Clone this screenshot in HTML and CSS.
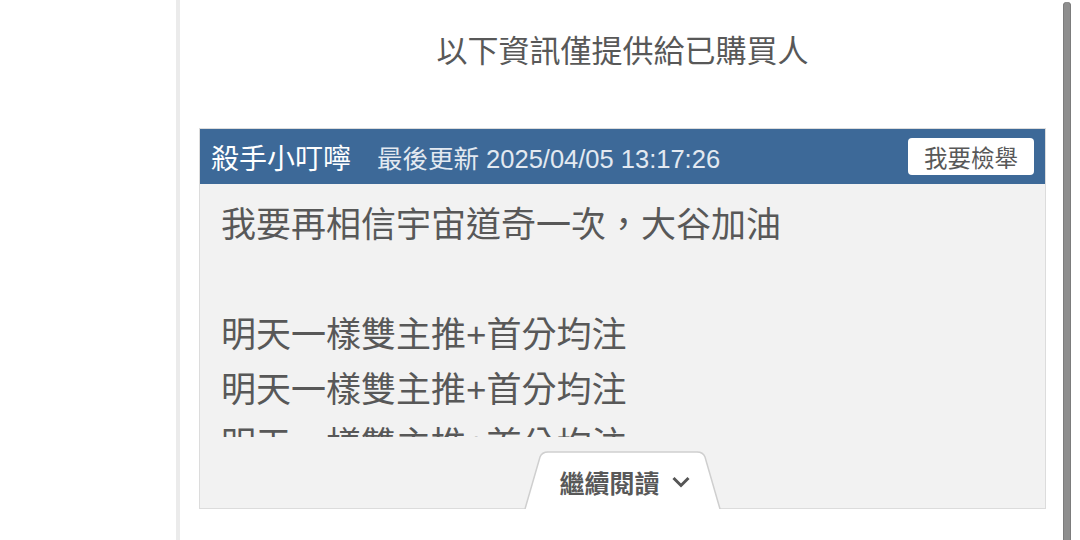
FILE: index.html
```html
<!DOCTYPE html>
<html lang="zh-Hant">
<head>
    <meta charset="UTF-8">
    <meta name="viewport" content="width=device-width, initial-scale=1.0">
    <title>殺手小叮嚀</title>
    <link rel="stylesheet" href="styles.css">
</head>
<body>
<div class="page">
    <aside class="side"></aside>
    <main class="panel">
        <p class="notice">以下資訊僅提供給已購買人</p>
        <section class="card">
            <header class="card-head">
                <span class="author">殺手小叮嚀</span>
                <span class="updated">最後更新 2025/04/05 13:17:26</span>
                <button class="report">我要檢舉</button>
            </header>
            <div class="card-body">
                <div class="content">
                    <p>我要再相信宇宙道奇一次，大谷加油</p>
                    <p>&nbsp;</p>
                    <p>明天一樣雙主推+首分均注</p>
                    <p>明天一樣雙主推+首分均注</p>
                    <p>明天一樣雙主推+首分均注</p>
                </div>
                <div class="more">
                    <a class="more-tab" href="#">
                        <svg class="tab-shape" width="197" height="58" viewBox="0 0 197 58">
                            <path d="M1 58 L16 6 Q18 1 24 1 L173 1 Q179 1 181 6 L196 58" fill="#fff" stroke="#cfcfcf" stroke-width="1.5"/>
                        </svg>
                        <span class="more-label">繼續閱讀</span>
                        <svg class="chev" width="18" height="12" viewBox="0 0 18 12">
                            <polyline points="1.5,2 9,9.5 16.5,2" fill="none" stroke="#555" stroke-width="3"/>
                        </svg>
                    </a>
                </div>
            </div>
        </section>
    </main>
    <div class="scroll">
        <div class="thumb"></div>
    </div>
</div>
</body>
</html>
```

FILE: styles.css
```css
body {
    margin: 0;
    padding: 0;
    background: #fff;
    font-family: "Liberation Sans", "Noto Sans CJK TC", sans-serif;
    color: #585858;
    overflow: hidden;
}

p {
    margin: 0;
}

.page {
    display: flex;
    height: 540px;
}

.side {
    width: 176px;
    flex-shrink: 0;
}

.panel {
    flex: 1;
    border-left: 4px solid #ebebeb;
    padding: 0 12px 0 19px;
}

.notice {
    text-align: center;
    font-size: 31px;
    line-height: 32px;
    padding-top: 36px;
    margin-bottom: 60px;
}

.card {
    border: 1px solid #dcdcdc;
    background: #f2f2f2;
}

.card-head {
    display: flex;
    align-items: center;
    height: 55px;
    padding: 0 11px 0 11px;
    background: #3d6998;
    color: #fff;
}

.author {
    font-size: 28px;
}

.updated {
    font-size: 25.5px;
    margin-left: 26px;
    color: #e3e9f1;
}

.report {
    margin-left: auto;
    height: 37px;
    padding: 0 16px;
    border: none;
    border-radius: 4px;
    background: #fff;
    color: #585858;
    font-family: "Liberation Sans", "Noto Sans CJK TC", sans-serif;
    font-size: 23.5px;
    cursor: pointer;
}

.card-body {
    padding: 13px 0 0 21px;
}

.content {
    height: 240px;
    overflow: hidden;
    font-size: 35px;
    line-height: 55px;
}

.more {
    display: flex;
    justify-content: center;
    padding-top: 14px;
    margin-left: -21px;
}

.more-tab {
    position: relative;
    display: flex;
    align-items: center;
    justify-content: center;
    gap: 12px;
    width: 197px;
    height: 58px;
    margin-bottom: -1px;
    padding: 4px 0 0 4px;
    box-sizing: border-box;
    text-decoration: none;
    color: #585858;
}

.tab-shape {
    position: absolute;
    left: 0;
    top: 0;
}

.more-label {
    position: relative;
    font-size: 25px;
    font-weight: bold;
}

.chev {
    position: relative;
    flex-shrink: 0;
}

.scroll {
    width: 22px;
    flex-shrink: 0;
}

.thumb {
    width: 8px;
    height: 540px;
    margin: 2px 0 0 5px;
    border-radius: 4px 4px 0 0;
    background: #8e8e8e;
    box-shadow: inset 1px 0 0 #7c7c7c, inset -1px 0 0 #7c7c7c;
}
```
